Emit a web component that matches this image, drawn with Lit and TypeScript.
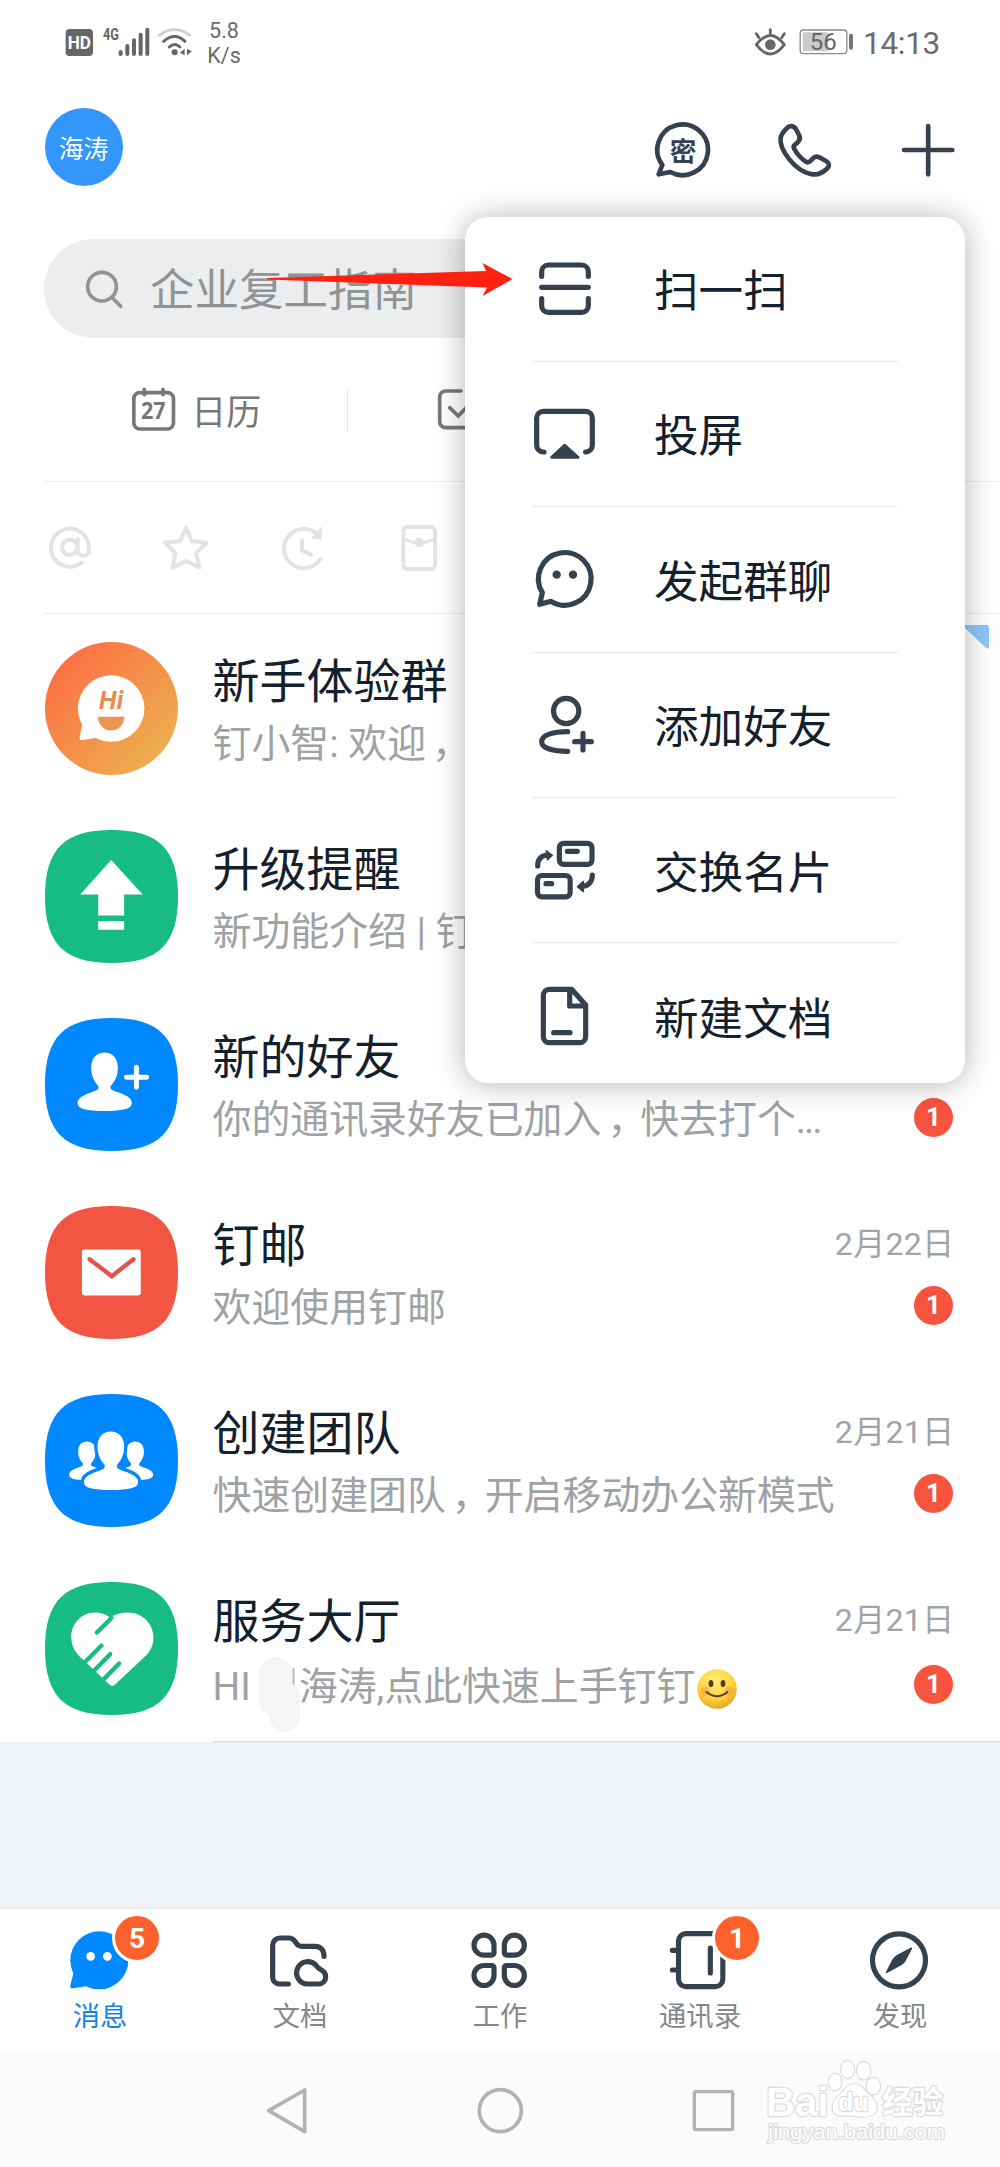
import { LitElement, html, css, svg, nothing } from "lit";
import type { TemplateResult, SVGTemplateResult } from "lit";
import { customElement } from "lit/decorators.js";

const INK = "#35414e";

const icon = (box: string, cls: string, body: SVGTemplateResult) => html`
  <svg class=${cls} viewBox=${box} fill="none" stroke=${INK} stroke-width="15.5"
    stroke-linecap="round" stroke-linejoin="round">${body}</svg>`;

const person = (transform: string, outlined = false) => svg`
  <path transform=${transform} fill="#fff" stroke=${outlined ? "#0088ff" : "none"} stroke-width=${outlined ? 20 : 0}
    style="paint-order:stroke"
    d="M179 104C156 104 139 120 139 150C139 175 148 190 160 204C163 214 158 218 140 223C115 232 98 240 98 256C98 275 125 280 179 280S261 275 261 256C261 240 245 232 219 223C200 218 195 214 198 204C210 190 219 175 219 150C219 120 202 104 179 104Z"/>`;

const SQUIRCLE = "M0 200C0 58 58 0 200 0S400 58 400 200 342 400 200 400 0 342 0 200Z";
const avatar = (fill: string, body: SVGTemplateResult) => html`
  <svg class="avatar" viewBox="0 0 400 400"><path d=${SQUIRCLE} fill=${fill}/>${body}</svg>`;

/* Full-width comma, centred in its cell */
const comma = html`<span class="comma">，</span>`;

interface Chat {
  avatar: TemplateResult;
  title: string;
  sub: TemplateResult;
  date?: string;
  badge?: number;
  low?: boolean;
}

const smile = html`<svg class="smile" viewBox="0 0 40 40">
  <defs><radialGradient id="sm" cx=".45" cy=".3" r=".75">
    <stop offset="0" stop-color="#fff07a"/><stop offset=".6" stop-color="#fdd23e"/><stop offset="1" stop-color="#e79a1c"/>
  </radialGradient></defs>
  <circle cx="20" cy="20" r="19.8" fill="url(#sm)"/>
  <circle cx="8" cy="22" r="4.5" fill="#f58c3c" opacity=".45"/><circle cx="32" cy="22" r="4.5" fill="#f58c3c" opacity=".45"/>
  <ellipse cx="14" cy="14.5" rx="2.4" ry="3.6" fill="#5f3a14"/><ellipse cx="26" cy="14.5" rx="2.4" ry="3.6" fill="#5f3a14"/>
  <path d="M9.500 23Q20 31.500 30.500 23" fill="none" stroke="#5f3a14" stroke-width="1.800" stroke-linecap="round"/>
</svg>`;

const chats: Chat[] = [
  {
    avatar: html`<svg class="avatar" viewBox="0 0 400 400">
      <defs><linearGradient id="hi" x1=".1" y1=".15" x2=".9" y2=".9">
        <stop offset="0" stop-color="#fd6f43"/><stop offset="1" stop-color="#ebb24f"/>
      </linearGradient></defs>
      <circle cx="200" cy="200" r="200" fill="url(#hi)"/>
      <path fill="#fff" d="M112 247L104 289Q103 296 111 295L160 287Z"/>
      <circle cx="199" cy="200" r="100" fill="#fff"/>
      <text x="199" y="201" text-anchor="middle" font-family="Roboto, sans-serif" font-weight="700" font-style="italic" font-size="77" fill="#ec8850">Hi</text>
      <path fill="#ee954d" d="M159 225H239A40 41 0 0 1 159 225Z"/>
    </svg>`,
    title: "新手体验群",
    sub: html`钉小智: 欢迎${comma}`,
  },
  {
    avatar: avatar("#17bc84", svg`<path fill="#fff" d="M199 90L294 194H238V257H160V194H106ZM160 274H238V300H160Z"/>`),
    title: "升级提醒",
    sub: html`新功能介绍 | 钉`,
  },
  {
    avatar: avatar("#0088ff", svg`${person("")}
      <path d="M245 178H306M275 148V208" stroke="#fff" stroke-width="15" stroke-linecap="round"/>`),
    title: "新的好友",
    sub: html`你的通讯录好友已加入${comma}快去打个<span class="dots">...</span>`,
    badge: 1,
  },
  {
    avatar: avatar("#f25542", svg`<rect x="111" y="131" width="177" height="138" rx="7" fill="#fff"/>
      <path d="M134 160L201 211L266 160" fill="none" stroke="#e2544b" stroke-width="13" stroke-linecap="round"/>`),
    title: "钉邮",
    sub: html`欢迎使用钉邮`,
    date: "2月22日",
    badge: 1,
  },
  {
    avatar: avatar("#0088ff", svg`${person("translate(8 74) scale(.66)")}${person("translate(153 74) scale(.66)")}${person("translate(19 9)", true)}`),
    title: "创建团队",
    sub: html`快速创建团队${comma}开启移动办公新模式`,
    date: "2月21日",
    badge: 1,
  },
  {
    avatar: avatar("#17bc84", svg`
      <path fill="#fff" d="M79 165C79 125 110 92 150 92C168 92 182 97 195 107C212 97 230 92 250 92C292 92 326 125 326 167C326 190 317 208 303 222L210 309Q201 317 192 307L105 225C88 208 79 190 79 165Z"/>
      <path stroke="#17bc84" stroke-width="13" stroke-linecap="round" d="M200 108L156 152M170 191L116 245M196 217L142 272M223 245L170 299"/>`),
    title: "服务大厅",
    sub: html`HI<span class="mask"><svg class="blob" viewBox="0 0 50 80">
      <path d="M39.500 12V33" stroke="#b4b7b9" stroke-width="2"/>
      <rect x="5" y="1" width="33" height="60" rx="16.500" fill="#f4f5f6"/><rect x="16" y="26" width="30" height="50" rx="15" fill="#f5f5f6"/>
    </svg></span>海涛,点此快速上手钉钉${smile}`,
    date: "2月21日",
    badge: 1,
    low: true,
  },
];

const menu: [string, TemplateResult][] = [
  ["扫一扫", icon("96 768 198 198", "micon", svg`<path d="M125 829V815a20 20 0 0 1 20-20H245a20 20 0 0 1 20 20V829M125 896V917a20 20 0 0 0 20 20H245a20 20 0 0 0 20-20V896M125 862H265"/>`)],
  ["投屏", icon("36 34 198 198", "micon", svg`<path d="M72 187H70a20 20 0 0 1-20-20V85a20 20 0 0 1 20-20H197a20 20 0 0 1 20 20V167a20 20 0 0 1-20 20"/>
    <path d="M134 167L95 203H174Z" fill=${INK} stroke-width="9"/>`)],
  ["发起群聊", icon("36 470 198 198", "micon", svg`<path d="M67 610A79 79 0 1 1 93 636L59 645Z"/>
    <g fill=${INK} stroke="none"><circle cx="110" cy="556" r="12.500"/><circle cx="159" cy="556" r="12.500"/></g>`)],
  ["添加好友", icon("36 906 198 198", "micon", svg`<circle cx="138.500" cy="963" r="38"/><path d="M143 1025C100 1025 65 1035 65 1055S100 1084 143 1084M164 1055H214M189 1030V1080"/>`)],
  ["交换名片", icon("36 1342 198 198", "micon", svg`<rect x="118" y="1361" width="98" height="63" rx="13"/><rect x="52.500" y="1457.500" width="98" height="64" rx="13"/>
    <path d="M142 1385H172M78 1482H95"/><path d="M53 1429C53 1410 62 1398 82 1396M217 1456C217 1476 205 1488 188 1490"/>
    <path d="M79 1383L97 1397L82 1411ZM190 1475L172 1491L190 1506Z" fill=${INK} stroke-width="4"/>`)],
  ["新建文档", icon("36 0 198 198", "micon", svg`<path d="M88 19H155L197 66V161a18 18 0 0 1-18 18H88a18 18 0 0 1-18-18V37a18 18 0 0 1 18-18ZM149 24V69H193M101 149H150"/>`)],
];

const PETAL = "M0-30A30 30 0 1 0 0 30H23a7 7 0 0 0 7-7V0A30 30 0 0 0 0-30Z";

const tabs: { label: string; art: TemplateResult; badge?: number }[] = [
  { label: "消息", badge: 5, art: icon("192 132 216 216", "ticon", svg`<g stroke="none"><path fill="#0088ff" d="M221 275L211 317Q210 326 219 325L264 318Z"/><circle cx="298" cy="241" r="87" fill="#0088ff"/><circle cx="272" cy="229" r="13" fill="#fff"/><circle cx="322" cy="229" r="13" fill="#fff"/></g>`) },
  { label: "文档", art: icon("792 132 216 216", "ticon", svg`<path d="M865 312H838a20 20 0 0 1-20-20V196a22 22 0 0 1 22-22H868C875 174 879 177 883 182L890 191C894 197 898 199 905 199H945C962 199 972 210 972 229"/>
    <path d="M923 312A33.500 33.500 0 1 1 949 257C954 264 958 267 964 270C972 274 977 280 977 290C977 303 968 312 955 312Z"/>`) },
  { label: "工作", art: icon("1392 132 216 216", "ticon", svg`<path d=${PETAL} transform="translate(1452 195.500)"/><path d=${PETAL} transform="translate(1543 195.500) scale(-1 1)"/><path d=${PETAL} transform="translate(1452 286.500) scale(1 -1)"/><path d=${PETAL} transform="translate(1543 286.500) scale(-1 -1)"/>`) },
  { label: "通讯录", badge: 1, art: icon("492 132 216 216", "ticon", svg`<rect x="535.500" y="161" width="133" height="159" rx="22"/><path d="M517 211H530M517 270H530M631 204V279"/>`) },
  { label: "发现", art: icon("1092 132 216 216", "ticon", svg`<circle cx="1197" cy="241" r="79.500"/><path fill=${INK} stroke-width="5" d="M1234 205L1192 227Q1183 232 1179 240L1160 277L1204 253Q1211 249 1215 241Z"/>`) },
];

@customElement("app-root")
export class AppRoot extends LitElement {
  static styles = css`
    :host { display: block; }
    * { box-sizing: border-box; }
    svg { display: block; flex: none; }
    .phone {
      position: relative; width: 1000px; height: 2167px; overflow: hidden; background: #fff;
      display: flex; flex-direction: column; color: #13202d;
      font-family: Roboto, "Noto Sans CJK SC", sans-serif;
    }
    .status { height: 84px; flex: none; display: flex; align-items: center; padding: 0 60px 0 63px; color: #6b6b6b; }
    .net { width: 133.3px; height: 35px; }
    .speed { margin-left: 11px; font-size: 21.500px; line-height: 25px; text-align: center; padding-top: 1px; }
    .eye { width: 35px; height: 30px; margin-left: auto; }
    .batt { width: 56.7px; height: 30px; margin-left: 10px; }
    .time { font-size: 31.500px; margin-left: 8px; line-height: 40px; padding-top: 3px; letter-spacing: -.3px; }

    .header { height: 155px; flex: none; display: flex; align-items: flex-start; padding: 24px 42.300px 0 44.500px; }
    .me { width: 78px; height: 78px; border-radius: 50%; background: #3296fa; color: #fff; font-size: 24.800px; display: flex; align-items: center; justify-content: center; }
    .actions { margin-left: auto; display: flex; gap: 62.300px; padding-top: 12px; }
    .hicon { width: 60px; height: 60px; }

    .search { flex: none; height: 99px; margin: 0 44px; border-radius: 50px; background: #ebedee; color: #8f9395; display: flex; align-items: center; font-size: 44.500px; padding-left: 40px; }
    .search svg { width: 42px; height: 42px; margin-right: 24px; }
    .search span { line-height: 60px; padding-top: 5px; }

    .shortcuts { flex: none; height: 144px; margin-left: 44.500px; display: flex; align-items: center; border-bottom: 1.500px solid #ececec; color: #777; }
    .cell { width: 303px; height: 44px; display: flex; align-items: center; justify-content: center; font-size: 35px; border-right: 1.500px solid #e6e6e6; }
    .cell svg { width: 47.300px; height: 47.300px; margin-right: 14px; }
    .cell.todo { justify-content: flex-start; border: 0; padding-left: 88px; }
    .filters { flex: none; height: 132px; margin-left: 44.500px; border-bottom: 1.500px solid #ececec; display: flex; align-items: center; gap: 68.600px; padding-left: 1px; }
    .ficon { width: 48px; height: 48px; }

    .list { flex: none; height: 1128px; }
    .row { height: 188px; padding: 28px 47px 0 44.500px; display: flex; }
    .avatar { width: 133px; height: 133px; }
    .body { flex: 1; margin-left: 35px; }
    .low .body { margin-right: -47px; padding-right: 47px; border-bottom: 1.500px solid #d9dadb; }
    .line { display: flex; justify-content: space-between; align-items: center; }
    .line.top { height: 60px; padding-top: 19px; }
    .line.sub { height: 60px; margin-top: 12px; }
    .low .line.sub { padding-top: 6px; }
    .title { font-size: 47px; line-height: 60px; white-space: nowrap; }
    .text { font-size: 38.900px; line-height: 56px; color: #9ea2a5; white-space: nowrap; }
    .date { font-size: 32.200px; line-height: 40px; color: #a0a4a7; margin: -3px -1.500px 0 0; letter-spacing: .2px; }
    .badge { width: 39px; height: 39px; border-radius: 50%; background: #f6543f; color: #fff; font-weight: 700; font-size: 26px; line-height: 39px; text-align: center; margin-top: -5px; }
    .comma { display: inline-block; width: 1em; text-indent: 6px; }
    .dots { letter-spacing: -2px; }
    .mask { display: inline-block; position: relative; width: 48px; height: 30px; }
    .blob { position: absolute; left: 3px; top: -14px; width: 50px; height: 80px; }
    .smile { display: inline-block; width: 40px; height: 40px; vertical-align: -9px; margin-left: 2px; }

    .rest { flex: 1; background: #f0f3f5; border-top: 1px solid #ebedef; border-bottom: 2px solid #ebecee; margin: 0; }
    .tabs { flex: none; height: 145px; display: grid; grid-template-columns: repeat(5, 1fr); }
    .tab { position: relative; display: flex; flex-direction: column; align-items: center; padding-top: 15px; color: #83878a; font-size: 27.300px; line-height: 43px; }
    .tab.on { color: #1583e6; }
    .ticon { width: 72px; height: 72px; }
    .bubble { position: absolute; left: 112px; top: 4px; width: 50px; height: 50px; border-radius: 50%; border: 3px solid #fff; background: #fe612c; color: #fff; font-size: 28px; font-weight: 700; line-height: 46px; text-align: center; }
    .nav { flex: none; height: 113px; background: #fbfbfb; display: flex; justify-content: center; gap: 164px; padding-top: 32px; }
    .nicon { width: 49px; height: 49px; }

    .corner { position: absolute; left: 957px; top: 625px; width: 32px; height: 24px; }
    .menu { position: absolute; left: 465px; top: 217px; width: 500px; height: 866px; border-radius: 23px; background: #fff; box-shadow: 0 1px 30px rgba(0,0,0,.3); padding: 0 67px; }
    .item { height: 145.400px; display: flex; align-items: center; border-bottom: 1.500px solid #e7e8e9; font-size: 44.600px; line-height: 60px; white-space: nowrap; }
    .item span { padding-top: 7px; }
    .item:first-child { height: 144.800px; }
    .item:last-child { border: 0; }
    .micon { width: 66px; height: 66px; margin-right: 56px; }
    .arrow { position: absolute; left: 265px; top: 260px; width: 250px; height: 38px; }
    .mark { position: absolute; left: 763px; top: 2055px; width: 186px; height: 94px; }
  `;

  private row(c: Chat) {
    return html`<div class="row ${c.low ? "low" : ""}">
      ${c.avatar}
      <div class="body">
        <div class="line top"><span class="title">${c.title}</span>${c.date ? html`<span class="date">${c.date}</span>` : nothing}</div>
        <div class="line sub"><span class="text">${c.sub}</span>${c.badge ? html`<span class="badge">${c.badge}</span>` : nothing}</div>
      </div>
    </div>`;
  }

  private status() {
    return html`<div class="status">
      <svg class="net" viewBox="190 75 400 105" fill="none" stroke-linecap="round" font-family="Roboto, sans-serif" font-weight="700">
        <rect x="198" y="87" width="82" height="81" rx="12" fill="#666"/>
        <text x="239" y="147" text-anchor="middle" font-size="54" fill="#fff" textLength="70" lengthAdjust="spacingAndGlyphs">HD</text>
        <text x="310" y="121" font-size="52" fill="#666" textLength="48" lengthAdjust="spacingAndGlyphs">4G</text>
        <path d="M363 156V162M383 138V162M403 121V162M423 104V162M443 89V162" stroke="#666" stroke-width="12"/>
        <path d="M479 106Q525 72 570 106" stroke="#cfcfcf" stroke-width="8"/>
        <path d="M492 124Q525 95 556 124M509 141Q525 126 541 141" stroke="#666" stroke-width="9"/>
        <circle cx="525" cy="157" r="9" fill="#666"/>
        <path d="M541 158L555 146V166ZM562 147L577 154L562 166Z" fill="#666"/>
      </svg>
      <div class="speed">5.8<br>K/s</div>
      <svg class="eye" viewBox="755 80 105 90" fill="none" stroke="#666" stroke-width="8.500" stroke-linecap="round">
        <path d="M765 133Q807 78 849 133Q807 189 765 133Z" stroke-linejoin="round"/>
        <circle cx="807" cy="133" r="16" fill="#666" stroke="none"/><path d="M807 88V102M765 100L773 112M849 100L841 112"/>
      </svg>
      <svg class="batt" viewBox="890 82 170 90">
        <rect x="896.500" y="91" width="140" height="71" rx="10" fill="none" stroke="#8a8a8a" stroke-width="4"/>
        <rect x="904" y="98" width="76" height="57" rx="4" fill="#cacaca"/>
        <rect x="1043" y="102" width="12" height="48" rx="5" fill="#777"/>
        <text x="966" y="151" text-anchor="middle" font-family="Roboto, sans-serif" font-size="72" fill="#666">56</text>
      </svg>
      <span class="time">14:13</span>
    </div>`;
  }

  private header() {
    return html`<div class="header">
      <div class="me">海涛</div>
      <div class="actions">
        ${icon("460 360 180 180", "hicon", svg`<path stroke-width="14" d="M488 495A76 76 0 1 1 512 516L477 523Z"/>
          <text x="550" y="484" text-anchor="middle" font-family="'Noto Sans CJK SC', sans-serif" font-weight="700" font-size="80" fill=${INK} stroke="none">密</text>`)}
        ${icon("827 360 180 180", "hicon", svg`<path stroke-width="14" d="M862 385C870 376 882 376 889 386L899 405C904 414 902 420 896 426L887 434C882 438 882 442 885 447C893 462 905 475 918 484C923 488 928 487 932 484L943 473C948 469 954 469 960 472L981 484C990 489 991 497 985 504C970 519 955 525 940 523C915 519 890 503 870 478C850 453 841 430 844 412C847 400 853 394 862 385Z"/>`)}
        ${icon("1193 360 180 180", "hicon", svg`<path stroke-width="14" d="M1211 450H1356M1283.500 378V523"/>`)}
      </div>
    </div>`;
  }

  private filters() {
    return html`<div class="filters">
      <svg class="ficon" viewBox="137 522 144 144" fill="none" stroke="#e3e3e3" stroke-width="12" stroke-linecap="round"><path d="M244 638A57 57 0 1 1 266 593V600a17 17 0 0 1-34 0V568"/><circle cx="208" cy="592" r="23"/></svg>
      <svg class="ficon" viewBox="486 522 144 144" fill="none" stroke="#e3e3e3" stroke-width="12" stroke-linejoin="round"><path d="M558 533L575 573L620 578L588 609L599 652L558 633L518 652L526 609L495 578L541 573Z"/></svg>
      <svg class="ficon" viewBox="836 522 144 144" fill="none" stroke="#e3e3e3" stroke-width="12" stroke-linecap="round"><path d="M960 627A59 59 0 1 1 954 556M905 571V601L932 614"/><path d="M958 545V562L944 561Z" fill="#e3e3e3"/></svg>
      <svg class="ficon" viewBox="1186 522 144 144" fill="none" stroke="#e3e3e3" stroke-width="12"><rect x="1211" y="531" width="95" height="126" rx="11"/><path d="M1213 567Q1258 590 1304 567" stroke-width="9"/><circle cx="1258" cy="577" r="14" fill="#e3e3e3" stroke="none"/></svg>
    </div>`;
  }

  render() {
    return html`<div class="phone">
      ${this.status()}
      ${this.header()}
      <div class="search">
        <svg viewBox="252 800 126 126" fill="none" stroke="#8f9395" stroke-width="11" stroke-linecap="round"><circle cx="306" cy="856" r="43"/><path d="M337 889L362 915"/></svg>
        <span>企业复工指南</span>
      </div>
      <div class="shortcuts">
        <div class="cell">
          <svg viewBox="390 110 142 142" fill="none" stroke="#777" stroke-width="11" stroke-linecap="round">
            <rect x="401.500" y="130" width="119" height="109" rx="18"/><path d="M433 120V136M489 120V136"/>
            <text x="460" y="209" text-anchor="middle" stroke="none" fill="#777" font-family="'Open Sans', sans-serif" font-weight="700" font-size="68" textLength="74" lengthAdjust="spacingAndGlyphs">27</text>
          </svg>日历
        </div>
        <div class="cell todo">
          <svg viewBox="1305 109 142 142" fill="none" stroke="#777" stroke-width="11" stroke-linecap="round">
            <path d="M1380 124H1334a18 18 0 0 0-18 18V216a18 18 0 0 0 18 18H1410M1346 174L1372 199L1404 165"/>
          </svg>
        </div>
      </div>
      ${this.filters()}
      <div class="list">${chats.map((c) => this.row(c))}</div>
      <div class="rest"></div>
      <div class="tabs">${tabs.map((t, i) => html`<div class="tab ${i === 0 ? "on" : ""}">${t.art}<span>${t.label}</span>${t.badge ? html`<span class="bubble">${t.badge}</span>` : nothing}</div>`)}</div>
      <div class="nav">
        <svg class="nicon" viewBox="786 617 147 147" fill="none" stroke="#b2b2b2" stroke-width="11" stroke-linejoin="round"><path d="M803 691L911 629V754Z"/></svg>
        <svg class="nicon" viewBox="1427 617 147 147" fill="none" stroke="#b2b2b2" stroke-width="11"><circle cx="1500" cy="691" r="63"/></svg>
        <svg class="nicon" viewBox="2062 617 147 147" fill="none" stroke="#b2b2b2" stroke-width="10"><rect x="2078" y="634" width="115" height="114" rx="4"/></svg>
      </div>

      <svg class="corner" viewBox="0 0 32 24"><path fill="#8cc6f8" d="M0 0H29Q32 0 32 3V21Q32 25 29 23L8 3Z"/></svg>
      <div class="menu">${menu.map(([label, art]) => html`<div class="item">${art}<span>${label}</span></div>`)}</div>
      <svg class="arrow" viewBox="265 260 250 38"><path fill="#ff2012" d="M267 278L486 271L482.500 263L512.500 279L482.500 296L487 287.500L267 279.500Z"/></svg>
      <svg class="mark" viewBox="789 525 558 282" fill="#fff" stroke="#dcdcdc" stroke-width="7" stroke-linejoin="round" style="paint-order:stroke">
        <text x="798" y="707" font-family="'Liberation Sans', sans-serif" font-weight="700" font-size="120" textLength="188" lengthAdjust="spacingAndGlyphs">Bai</text>
        <ellipse cx="1005" cy="606" rx="19" ry="25"/><ellipse cx="1043" cy="568" rx="19" ry="26"/><ellipse cx="1091" cy="572" rx="20" ry="26"/><ellipse cx="1120" cy="618" rx="20" ry="25"/>
        <path d="M1062 613C1042 613 1032 632 1018 646C1005 658 998 668 998 682C998 700 1012 709 1028 707C1050 703 1075 712 1095 710C1115 709 1130 698 1130 680C1130 662 1113 650 1102 640C1090 628 1082 613 1062 613Z"/>
        <text x="1014" y="694" font-family="'Liberation Sans', sans-serif" font-weight="700" font-size="76" textLength="92" lengthAdjust="spacingAndGlyphs">du</text>
        <text x="1147" y="700" font-family="'Noto Sans CJK SC', sans-serif" font-weight="700" font-size="91">经验</text>
        <text x="805" y="778" font-family="'Liberation Sans', sans-serif" font-size="62" textLength="530" lengthAdjust="spacingAndGlyphs">jingyan.baidu.com</text>
      </svg>
    </div>`;
  }
}
